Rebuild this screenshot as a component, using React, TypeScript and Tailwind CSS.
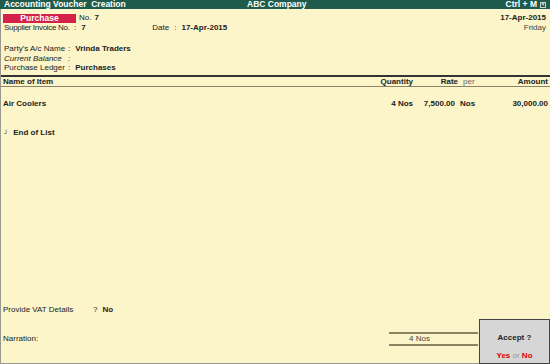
import React from 'react';

export default function App() {
  return (
    <div
      className="relative w-[550px] h-[364px] overflow-hidden whitespace-nowrap bg-[#fbf5c9] text-[8px] text-[#222]"
      style={{ fontFamily: '"Liberation Sans", Arial, sans-serif' }}
    >
      {/* Title bar */}
      <div className="flex h-[9px] items-center bg-[#1e5b4d] px-[4px] text-[8.5px] font-bold leading-[9px] text-white">
        <span className="w-[243px]">Accounting Voucher&nbsp; Creation</span>
        <span className="flex-1">ABC Company</span>
        <span>Ctrl + M</span>
        <span className="ml-[3px] flex h-[6px] w-[6px] items-center justify-center border border-[#ccc] text-[5px] leading-none">
          ×
        </span>
      </div>

      <div className="flex h-[355px] flex-col border-b border-l border-[#9a9a90]">
        {/* Voucher header */}
        <div className="px-[2px] pt-[4px]">
          <div className="flex h-[10px] items-center">
            <div className="flex h-[9px] w-[73px] shrink-0 items-center justify-center bg-[#d4214c] text-[8.5px] font-bold text-white">
              Purchase
            </div>
            <span className="ml-[3px]">No.</span>
            <span className="ml-[3px] font-bold">7</span>
            <span className="ml-auto mr-[2px] font-bold">17-Apr-2015</span>
          </div>
          <div className="flex h-[10px] items-center pl-[1px]">
            <span className="w-[69px] shrink-0 tracking-[-0.3px]">Supplier Invoice No.</span>
            <span className="ml-[1px]">:</span>
            <span className="ml-[5px] w-[71px] shrink-0 font-bold">7</span>
            <span className="w-[22px] shrink-0">Date</span>
            <span>:</span>
            <span className="ml-[5px] font-bold">17-Apr-2015</span>
            <span className="ml-auto mr-[2px] text-[#444]">Friday</span>
          </div>

          <div className="mt-[11px] flex h-[10px] items-center pl-[1px]">
            <span className="w-[64px] shrink-0">Party's A/c Name</span>
            <span>:</span>
            <span className="ml-[5px] font-bold">Vrinda Traders</span>
          </div>
          <div className="flex h-[9px] items-center pl-[1px] italic">
            <span className="w-[64px] shrink-0">Current Balance</span>
            <span>:</span>
          </div>
          <div className="flex h-[10px] items-center pl-[1px]">
            <span className="w-[64px] shrink-0">Purchase Ledger</span>
            <span>:</span>
            <span className="ml-[5px] font-bold">Purchases</span>
          </div>
        </div>

        {/* Item table header */}
        <div className="mt-[2px] flex h-[12px] items-center border-t-2 border-b border-t-[#333] border-b-[#8a8468] px-[2px] font-bold">
          <span className="flex-1">Name of Item</span>
          <span className="w-[60px] text-right">Quantity</span>
          <span className="w-[45px] text-right">Rate</span>
          <span className="ml-[5px] w-[25px] font-normal text-[#666]">per</span>
          <span className="w-[60px] text-right">Amount</span>
        </div>

        <div className="mt-[12px] flex h-[10px] items-center px-[2px] font-bold">
          <span className="flex-1">Air Coolers</span>
          <span className="w-[60px] text-right">4 Nos</span>
          <span className="w-[42px] text-right">7,500.00</span>
          <span className="ml-[5px] w-[28px]">Nos</span>
          <span className="w-[60px] text-right">30,000.00</span>
        </div>

        <div className="mt-[19px] flex h-[10px] items-center px-[3px] font-bold">
          <span className="mr-[5px] text-[6px] leading-none">┘</span>
          <span>End of List</span>
        </div>

        <div className="flex-1" />

        {/* Footer */}
        <div className="flex h-[10px] items-center px-[2px]">
          <span className="w-[90px] shrink-0">Provide VAT Details</span>
          <span>?</span>
          <span className="ml-[5px] font-bold">No</span>
        </div>
        <div className="mb-[17px] mt-[17px] flex h-[14px] items-center px-[2px]">
          <span>Narration:</span>
          <div className="ml-auto mr-[70px] flex h-[14px] w-[89px] items-center border-y-2 border-[#8a8462] pl-[20px] text-[#444]">
            4 Nos
          </div>
        </div>
      </div>

      {/* Accept prompt */}
      <div className="absolute bottom-0 right-0 flex h-[45px] w-[71px] flex-col items-center border border-[#444] bg-[#d6d6d6] font-bold">
        <span className="mt-[12px] text-[#222]">Accept ?</span>
        <span className="mb-[1px] mt-auto text-[#e00000]">
          Yes <span className="font-normal text-[#999]">or</span> No
        </span>
      </div>
    </div>
  );
}
